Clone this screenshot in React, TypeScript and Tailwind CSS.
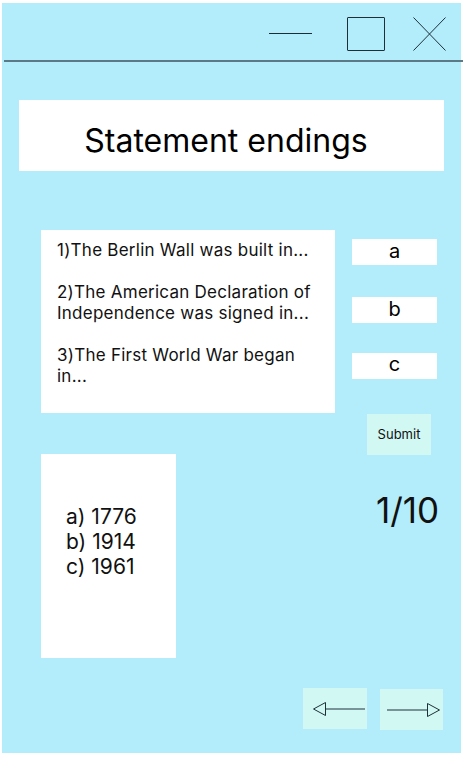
import React from "react";

export default function App() {
  return (
    <div
      className="w-[463px] h-[757px] bg-white pt-[3px] pl-[2px] pr-[2px] pb-[4px] overflow-hidden"
      style={{ fontFamily: "Inter, 'Noto Sans', sans-serif" }}
    >
      <div className="h-full bg-[#b3edfc] flex flex-col text-black">
        {/* title bar */}
        <div className="h-[57px] flex items-start justify-end pt-[14px] pr-[15px]">
          <div className="w-[43px] h-px bg-[#1d2d33] mt-[16px]" />
          <div className="ml-[35px] w-[38px] h-[34px] border border-[#1d3038] rounded-[1px]" />
          <svg className="ml-[28px]" width="33" height="34" viewBox="0 0 33 34">
            <path d="M0.5 33.5 L32.5 0.5 M0.5 0.5 L32.5 33.5" stroke="#1d3038" strokeWidth="1" fill="none" />
          </svg>
        </div>
        <div className="h-[2px] bg-[#5b7a85] ml-[2px] -mr-[2px]" />

        {/* heading */}
        <div className="mt-[38px] ml-[17px] w-[425px] h-[71px] bg-white flex items-center justify-center text-[32px] leading-none pt-[10px] pr-[11px]">
          Statement endings
        </div>

        {/* questions row */}
        <div className="mt-[59px] flex">
          <div className="ml-[39px] w-[294px] h-[183px] bg-white pt-[10px] pl-[16px] pr-[10px] text-[17px] tracking-[0.25px] leading-[21px] text-[#111]">
            <p>1)The Berlin Wall was built in...</p>
            <p className="mt-[21px]">2)The American Declaration of Independence was signed in...</p>
            <p className="mt-[21px]">3)The First World War began in...</p>
          </div>
          <div className="ml-[17px] w-[85px] flex flex-col text-[20px] leading-none">
            <div className="mt-[9px] h-[26px] bg-white flex items-center justify-center pb-[2px]">a</div>
            <div className="mt-[32px] h-[26px] bg-white flex items-center justify-center pb-[2px]">b</div>
            <div className="mt-[30px] h-[26px] bg-white flex items-start justify-center pt-[1px]">c</div>
          </div>
        </div>

        {/* lower section */}
        <div className="flex">
          <div className="ml-[39px] mt-[41px] w-[135px] h-[204px] bg-white pt-[50px] pl-[25px] text-[21px] leading-[25px] text-[#111]">
            <p>a) 1776</p>
            <p>b) 1914</p>
            <p>c) 1961</p>
          </div>
          <div className="ml-[191px] flex flex-col items-start">
            <div className="mt-[1px] w-[64px] h-[41px] bg-[#d2f8f4] flex items-center justify-center text-[13px] text-[#111]">
              Submit
            </div>
            <div className="mt-[38px] ml-[9px] text-[35px] leading-none text-[#111]">1/10</div>
          </div>
        </div>

        {/* nav */}
        <div className="mt-[30px] flex pl-[301px]">
          <div className="w-[64px] h-[41px] bg-[#d2f8f4] flex items-center pl-[10px]">
            <svg width="53" height="16" viewBox="0 0 53 16">
              <path d="M0.5 8 L12.5 1.5 L12.5 14.5 Z" stroke="#1d3038" strokeWidth="1" fill="none" />
              <path d="M12.5 8 L52 8" stroke="#1d3038" strokeWidth="1.2" />
            </svg>
          </div>
          <div className="ml-[13px] mt-[1px] w-[63px] h-[41px] bg-[#d2f8f4] flex items-center pl-[7px]">
            <svg width="53" height="16" viewBox="0 0 53 16">
              <path d="M52.5 8 L40.5 1.5 L40.5 14.5 Z" stroke="#1d3038" strokeWidth="1" fill="none" />
              <path d="M0 8 L40.5 8" stroke="#1d3038" strokeWidth="1.2" />
            </svg>
          </div>
        </div>
      </div>
    </div>
  );
}
